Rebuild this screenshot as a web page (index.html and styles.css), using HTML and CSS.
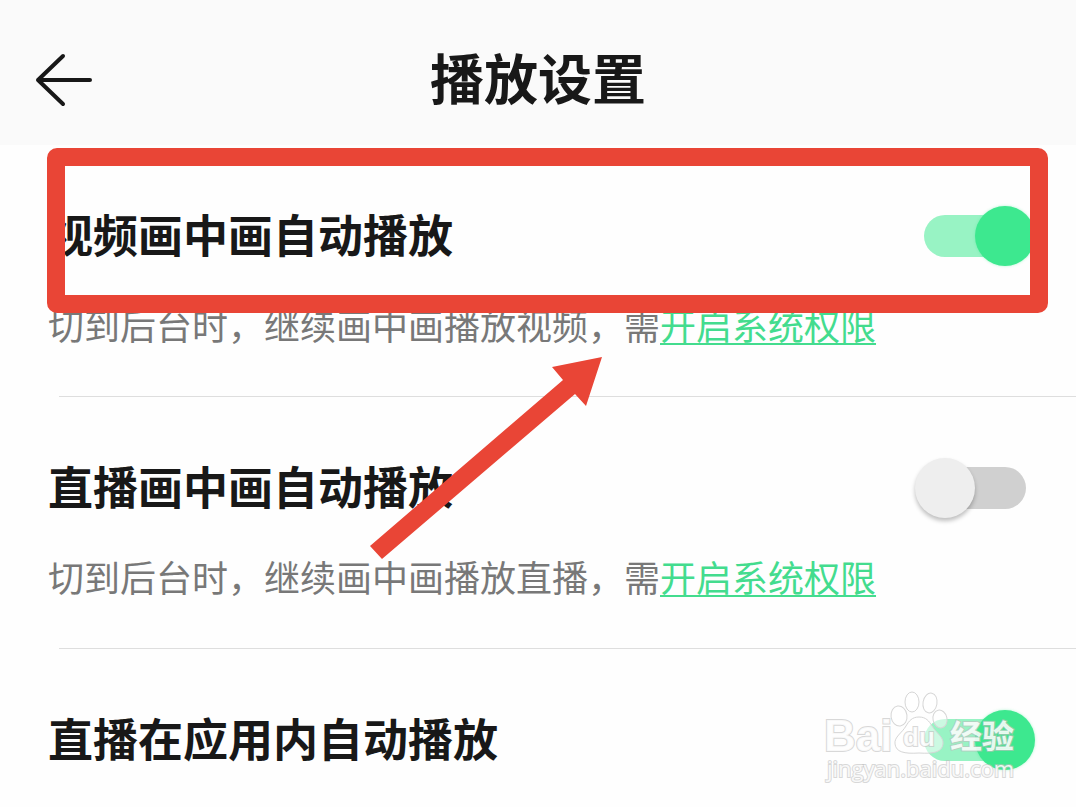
FILE: index.html
```html
<!DOCTYPE html>
<html lang="zh-CN">
<head>
<meta charset="utf-8">
<meta name="viewport" content="width=device-width, initial-scale=1">
<title>播放设置</title>
<link rel="stylesheet" href="styles.css">
</head>
<body>
<header class="topbar">
  <button class="back" type="button" aria-label="返回">
    <svg class="back-icon" viewBox="0 0 60 60" aria-hidden="true">
      <path d="M29 6 L4 30 L29 54 M4 30 H56"/>
    </svg>
  </button>
  <h1 class="topbar-title">播放设置</h1>
</header>
<main class="settings">
  <section class="item">
    <div class="item-head">
      <label class="item-title" for="video-pip">视频画中画自动播放</label>
      <input class="switch" type="checkbox" id="video-pip" checked>
    </div>
    <p class="item-note">切到后台时，继续画中画播放视频，需<a class="link" href="#">开启系统权限</a></p>
  </section>
  <hr class="divider">
  <section class="item">
    <div class="item-head">
      <label class="item-title" for="live-pip">直播画中画自动播放</label>
      <input class="switch" type="checkbox" id="live-pip">
    </div>
    <p class="item-note">切到后台时，继续画中画播放直播，需<a class="link" href="#">开启系统权限</a></p>
  </section>
  <hr class="divider">
  <section class="item item-last">
    <div class="item-head">
      <label class="item-title" for="live-inapp">直播在应用内自动播放</label>
      <input class="switch" type="checkbox" id="live-inapp" checked>
    </div>
  </section>
  <div class="highlight"></div>
  <svg class="pointer" viewBox="0 0 234 204" aria-hidden="true">
    <path d="M233 1 L183 11 L194 24 L1 190 L13 203 L206 38 L217 50 Z"/>
  </svg>
  <svg class="watermark" viewBox="0 0 200 94" aria-hidden="true">
    <g class="mark-paw">
      <ellipse cx="73" cy="26" rx="8" ry="10" transform="rotate(-8 73 26)"/>
      <ellipse cx="86" cy="12" rx="7" ry="10"/>
      <ellipse cx="104" cy="13" rx="7" ry="10" transform="rotate(10 104 13)"/>
      <ellipse cx="114" cy="29" rx="7" ry="9" transform="rotate(-12 114 29)"/>
      <path d="M93 27 C86 27 83 31 80 36 C76 43 68 47 69 54 C70 62 78 64 93 63 C108 64 116 62 117 54 C118 47 110 43 106 36 C103 31 100 27 93 27 Z"/>
    </g>
    <g class="mark-text">
      <text class="mark-brand" x="-2" y="61">Bai</text>
      <text class="mark-du" x="77" y="56">du</text>
      <text class="mark-cn" x="124" y="58">经验</text>
      <text class="mark-url" x="1" y="87">jingyan.baidu.com</text>
    </g>
  </svg>
</main>
</body>
</html>
```
FILE: styles.css
```css
* {
  box-sizing: border-box;
}

body {
  margin: 0;
  background: #fefefe;
  color: #181818;
  font-family: "Noto Sans CJK SC", sans-serif;
}

.topbar {
  display: grid;
  grid-template-columns: 60px 1fr 60px;
  align-items: center;
  padding: 15px 34px 0;
  min-height: 145px;
  background: #fafafa;
}

.back {
  display: flex;
  padding: 0;
  border: 0;
  background: none;
}

.back-icon {
  width: 60px;
  height: 60px;
  fill: none;
  stroke: #181818;
  stroke-width: 4;
  stroke-linecap: round;
  stroke-linejoin: round;
}

.topbar-title {
  margin: 0;
  padding-bottom: 6px;
  font-size: 54px;
  line-height: 80px;
  font-weight: 700;
  text-align: center;
}

.settings {
  position: relative;
}

.item {
  display: flex;
  flex-direction: column;
  gap: 34px;
  padding: 61px 41px 48px 48px;
}

.item-last {
  padding-bottom: 37px;
}

.item-head {
  display: flex;
  align-items: center;
  justify-content: space-between;
}

.item-title {
  padding-bottom: 4px;
  font-size: 45px;
  line-height: 56px;
  font-weight: 700;
}

.item-note {
  margin: 0;
  color: #787878;
  font-size: 36px;
  line-height: 48px;
}

.link {
  color: #43dc8e;
  text-decoration-thickness: 2px;
  text-underline-offset: 3px;
}

.divider {
  height: 1px;
  margin: 0 0 0 59px;
  border: 0;
  background: #dedede;
}

.switch {
  display: grid;
  flex: none;
  align-items: center;
  width: 120px;
  height: 60px;
  margin: 0;
  appearance: none;
}

.switch::before,
.switch::after {
  grid-area: 1 / 1;
  content: "";
}

.switch::before {
  height: 42px;
  margin: 0 9px;
  border-radius: 21px;
  background: #d0d0d0;
}

.switch::after {
  width: 60px;
  height: 60px;
  border-radius: 50%;
  background: #eeeeee;
  box-shadow: 0 3px 4px rgba(0, 0, 0, 0.25);
}

.switch:checked::before {
  background: #98f3c4;
}

.switch:checked::after {
  justify-self: end;
  background: #3de88f;
  box-shadow: 0 0 3px rgba(61, 232, 143, 0.4);
}

.highlight {
  position: absolute;
  top: 3px;
  left: 47px;
  right: 28px;
  height: 165px;
  border: 18px solid #e94536;
  border-radius: 10px;
  pointer-events: none;
}

.pointer {
  position: absolute;
  top: 211px;
  left: 369px;
  width: 234px;
  height: 204px;
  fill: #e94536;
  pointer-events: none;
}

.watermark {
  position: absolute;
  right: 50px;
  bottom: 23px;
  width: 200px;
  height: 94px;
  overflow: visible;
  pointer-events: none;
}

.mark-paw {
  fill: rgba(255, 255, 255, 0.5);
  stroke: #d6d6d6;
  stroke-width: 1;
}

.mark-text {
  fill: rgba(255, 255, 255, 0.85);
  stroke: rgba(190, 190, 190, 0.6);
  stroke-width: 2;
  paint-order: stroke;
}

.mark-brand {
  font: 700 44px "Liberation Sans", sans-serif;
}

.mark-du {
  font: 700 26px "Liberation Sans", sans-serif;
}

.mark-cn {
  font: 700 32px "Noto Sans CJK SC", sans-serif;
}

.mark-url {
  font: 400 22px "Open Sans", sans-serif;
}
```
